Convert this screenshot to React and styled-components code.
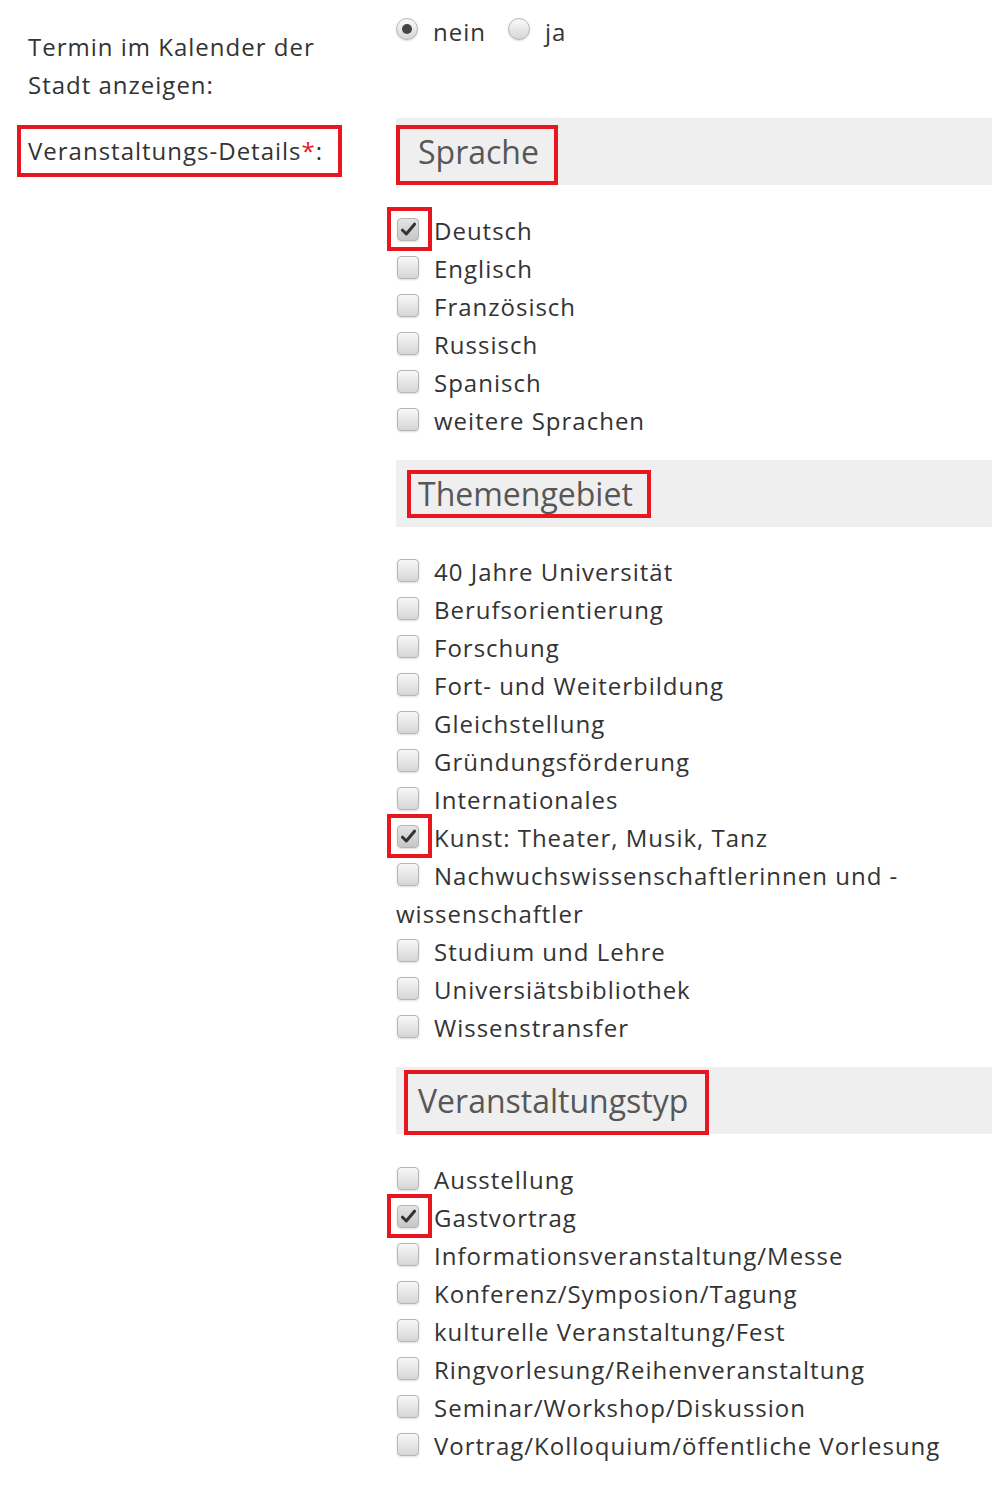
import styled, { createGlobalStyle } from "styled-components";

const GlobalStyle = createGlobalStyle`
  body {
    margin: 0;
    background: #fff;
    font-family: "Open Sans", "Liberation Sans", sans-serif;
    color: #333;
  }
`;

const RED = "#e8161f";

const Page = styled.div`
  width: 992px;
  overflow: hidden;
  display: grid;
  grid-template-columns: 396px 596px;
  font-size: 24px;
  line-height: 38px;
  letter-spacing: 1px;
`;

const LabelCell = styled.div`
  padding: ${(p) => p.$pad || "0"};
  padding-left: 28px;
`;

const FieldCell = styled.div`
  padding: ${(p) => p.$pad || "0"};
`;

const Marked = styled.span`
  position: relative;
  display: inline-block;
  &::after {
    content: "";
    position: absolute;
    top: ${(p) => p.$t}px;
    left: ${(p) => p.$l}px;
    right: ${(p) => p.$r}px;
    bottom: ${(p) => p.$b}px;
    border: 4px solid ${RED};
    pointer-events: none;
  }
`;

const Star = styled.span`
  color: ${RED};
`;

const RadioRow = styled.div`
  display: flex;
  align-items: center;
  gap: 22px;
`;

const RadioOption = styled.label`
  display: inline-flex;
  align-items: center;
  gap: 15px;
`;

const Radio = styled.span`
  position: relative;
  top: -3px;
  width: 22px;
  height: 22px;
  border-radius: 50%;
  box-sizing: border-box;
  border: 1px solid #b5b5b5;
  background: linear-gradient(#fafafa, #d6d6d6);
  box-shadow: 0 1px 2px rgba(0, 0, 0, 0.14);
  &::after {
    content: "";
    display: ${(p) => (p.$on ? "block" : "none")};
    position: absolute;
    width: 10px;
    height: 10px;
    left: 5px;
    top: 5px;
    border-radius: 50%;
    background: #444;
  }
`;

const Band = styled.div`
  height: 67px;
  background: #efefef;
  display: flex;
  align-items: center;
  padding-left: 22px;
  margin-bottom: ${(p) => p.$mb}px;
  letter-spacing: 0;
`;

const BandTitle = styled.h3`
  margin: 0;
  font-weight: 400;
  font-size: 32px;
  line-height: 40px;
  color: #575757;
`;

const List = styled.div`
  margin-bottom: 20px;
`;

const Item = styled.label`
  display: block;
`;

const Box = styled.span`
  display: inline-block;
  position: relative;
  top: 1px;
  width: 22px;
  height: 23px;
  margin: 0 15px 0 1px;
  vertical-align: baseline;
  box-sizing: border-box;
  border: 1px solid #b5b5b5;
  border-radius: 4px;
  background: ${(p) =>
    p.$on ? "linear-gradient(#e4e4e4, #c6c6c6)" : "linear-gradient(#f8f8f8, #d6d6d6)"};
  box-shadow: 0 1px 2px rgba(0, 0, 0, 0.14);
  svg {
    position: absolute;
    left: 3px;
    top: 3px;
  }
  &::after {
    content: "";
    display: ${(p) => (p.$marked ? "block" : "none")};
    position: absolute;
    top: -12px;
    left: -11px;
    right: -14px;
    bottom: -11px;
    border: 4px solid ${RED};
  }
`;

const Check = () => (
  <svg width="15" height="15" viewBox="0 0 15 15">
    <path d="M1.5 8.2 L5.3 12 L13.5 2.2" fill="none" stroke="#333" strokeWidth="3" strokeLinecap="round" strokeLinejoin="round" />
  </svg>
);

const CheckItem = ({ label, on }) => (
  <Item>
    <Box $on={on} $marked={on}>
      {on && <Check />}
    </Box>
    {label}
  </Item>
);

const sections = [
  {
    title: "Sprache",
    mark: { t: -7, l: -22, r: -19, b: -13 },
    mb: 27,
    items: [
      ["Deutsch", true],
      ["Englisch"],
      ["Französisch"],
      ["Russisch"],
      ["Spanisch"],
      ["weitere Sprachen"],
    ],
  },
  {
    title: "Themengebiet",
    mark: { t: -4, l: -11, r: -18, b: -4 },
    mb: 26,
    items: [
      ["40 Jahre Universität"],
      ["Berufsorientierung"],
      ["Forschung"],
      ["Fort- und Weiterbildung"],
      ["Gleichstellung"],
      ["Gründungsförderung"],
      ["Internationales"],
      ["Kunst: Theater, Musik, Tanz", true],
      ["Nachwuchswissenschaftlerinnen und -wissenschaftler"],
      ["Studium und Lehre"],
      ["Universiätsbibliothek"],
      ["Wissenstransfer"],
    ],
  },
  {
    title: "Veranstaltungstyp",
    mark: { t: -11, l: -14, r: -21, b: -14 },
    mb: 27,
    items: [
      ["Ausstellung"],
      ["Gastvortrag", true],
      ["Informationsveranstaltung/Messe"],
      ["Konferenz/Symposion/Tagung"],
      ["kulturelle Veranstaltung/Fest"],
      ["Ringvorlesung/Reihenveranstaltung"],
      ["Seminar/Workshop/Diskussion"],
      ["Vortrag/Kolloquium/öffentliche Vorlesung"],
    ],
  },
];

export default function App() {
  return (
    <>
      <GlobalStyle />
      <Page>
        <LabelCell $pad="28px 0 14px">
          Termin im Kalender der
          <br />
          Stadt anzeigen:
        </LabelCell>
        <FieldCell $pad="13px 0 0">
          <RadioRow>
            <RadioOption>
              <Radio $on />
              nein
            </RadioOption>
            <RadioOption>
              <Radio />
              ja
            </RadioOption>
          </RadioRow>
        </FieldCell>

        <LabelCell $pad="14px 0 0">
          <Marked $t={-7} $l={-11} $r={-19} $b={-7}>
            Veranstaltungs-Details<Star>*</Star>:
          </Marked>
        </LabelCell>
        <FieldCell>
          {sections.map((s) => (
            <section key={s.title}>
              <Band $mb={s.mb}>
                <Marked $t={s.mark.t} $l={s.mark.l} $r={s.mark.r} $b={s.mark.b}>
                  <BandTitle>{s.title}</BandTitle>
                </Marked>
              </Band>
              <List>
                {s.items.map(([label, on]) => (
                  <CheckItem key={label} label={label} on={on} />
                ))}
              </List>
            </section>
          ))}
        </FieldCell>
      </Page>
    </>
  );
}
